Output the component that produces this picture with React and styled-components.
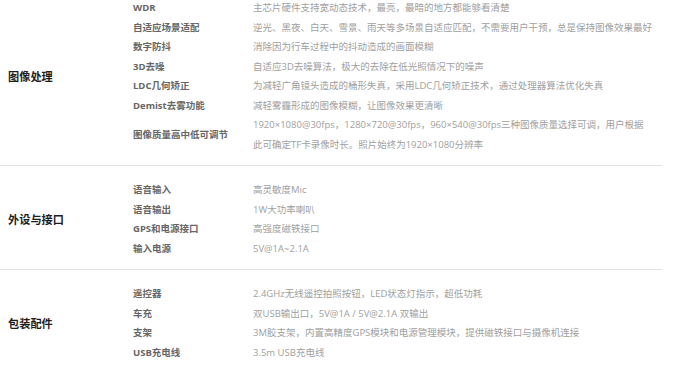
import React from 'react';
import styled, { createGlobalStyle } from 'styled-components';

const GlobalStyle = createGlobalStyle`
  html, body {
    margin: 0;
    padding: 0;
    background: #ffffff;
  }
  body {
    font-family: "Open Sans", "Noto Sans CJK SC", sans-serif;
    overflow: hidden;
  }
`;

const Page = styled.div`
  width: 662px;
  margin-top: -16px;
`;

const Section = styled.section`
  display: flex;
  align-items: center;
  padding: 14px 0 11px;
  border-bottom: ${p => (p.$last ? 'none' : '1px solid #e3e3e3')};
`;

const SectionTitle = styled.h3`
  width: 125px;
  margin: 0 0 0 8px;
  font-family: "Noto Sans CJK SC", sans-serif;
  font-size: 11.2px;
  font-weight: 700;
  color: #1e1e1e;
`;

const Rows = styled.div`
  flex: 1;
  display: flex;
  flex-direction: column;
`;

const Row = styled.div`
  display: grid;
  grid-template-columns: 120px 1fr;
  align-items: center;
  line-height: 19.5px;
`;

const Label = styled.div`
  font-size: 9.5px;
  font-weight: 700;
  color: #666666;
  white-space: nowrap;
`;

const Value = styled.div`
  font-size: 9.5px;
  color: #a0a0a0;
  white-space: nowrap;
`;

const sections = [
  {
    title: '图像处理',
    rows: [
      ['WDR', ['主芯片硬件支持宽动态技术，最亮，最暗的地方都能够看清楚']],
      ['自适应场景适配', ['逆光、黑夜、白天、雪景、雨天等多场景自适应匹配，不需要用户干预，总是保持图像效果最好']],
      ['数字防抖', ['消除因为行车过程中的抖动造成的画面模糊']],
      ['3D去噪', ['自适应3D去噪算法，极大的去除在低光照情况下的噪声']],
      ['LDC几何矫正', ['为减轻广角镜头造成的桶形失真，采用LDC几何矫正技术，通过处理器算法优化失真']],
      ['Demist去雾功能', ['减轻雾霾形成的图像模糊，让图像效果更清晰']],
      ['图像质量高中低可调节', [
        '1920×1080@30fps，1280×720@30fps，960×540@30fps三种图像质量选择可调，用户根据',
        '此可确定TF卡录像时长。照片始终为1920×1080分辨率',
      ]],
    ],
  },
  {
    title: '外设与接口',
    rows: [
      ['语音输入', ['高灵敏度Mic']],
      ['语音输出', ['1W大功率喇叭']],
      ['GPS和电源接口', ['高强度磁铁接口']],
      ['输入电源', ['5V@1A~2.1A']],
    ],
  },
  {
    title: '包装配件',
    rows: [
      ['遥控器', ['2.4GHz无线遥控拍照按钮，LED状态灯指示，超低功耗']],
      ['车充', ['双USB输出口，5V@1A / 5V@2.1A 双输出']],
      ['支架', ['3M胶支架，内置高精度GPS模块和电源管理模块，提供磁铁接口与摄像机连接']],
      ['USB充电线', ['3.5m USB充电线']],
    ],
  },
];

export default function App() {
  return (
    <>
      <GlobalStyle />
      <Page>
        {sections.map((s, i) => (
          <Section key={s.title} $last={i === sections.length - 1}>
            <SectionTitle>{s.title}</SectionTitle>
            <Rows>
              {s.rows.map(([label, lines]) => (
                <Row key={label}>
                  <Label>{label}</Label>
                  <Value>
                    {lines.map((l, j) => (
                      <div key={j}>{l}</div>
                    ))}
                  </Value>
                </Row>
              ))}
            </Rows>
          </Section>
        ))}
      </Page>
    </>
  );
}
